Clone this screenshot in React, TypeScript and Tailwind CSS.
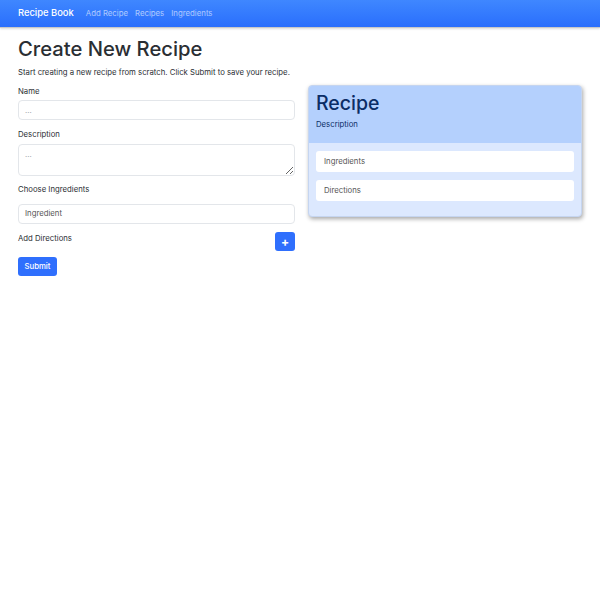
export default function App() {
  return (
    <div className="min-h-screen bg-white font-['Inter',sans-serif] text-[#2a2e33]">
      {/* Navbar */}
      <nav className="h-[28px] border-b border-[#c8c8c8] bg-gradient-to-b from-[#3f87ff] to-[#2a6efc] shadow-[0_1px_2px_rgba(0,0,0,0.15)]">
        <div className="flex h-full items-center px-[18px]">
          <span className="mr-[12px] text-[9.4px] font-medium text-white">Recipe Book</span>
          <div className="flex gap-[7px] text-[7.8px] text-white/60">
            <span>Add Recipe</span>
            <span>Recipes</span>
            <span>Ingredients</span>
          </div>
        </div>
      </nav>

      <div className="px-[18px] pt-[8px]">
        <h1 className="text-[20.2px] font-medium leading-[26px]">Create New Recipe</h1>
        <p className="mt-[4px] text-[7.75px] leading-[12px]">
          Start creating a new recipe from scratch. Click Submit to save your recipe.
        </p>

        <div className="mt-[3px] flex gap-[13px]">
          {/* Form */}
          <div className="w-[277px] shrink-0">
            <label className="block pt-[4px] text-[7.75px] leading-[12px]">Name</label>
            <input
              placeholder="..."
              className="mt-[3px] block h-[20px] w-full rounded-[4px] border border-[#e3e6ea] px-[6px] text-[7.75px] placeholder:text-[#9aa0a6]"
            />
            <label className="mt-[8px] block text-[7.75px] leading-[12px]">Description</label>
            <textarea
              placeholder="..."
              className="mt-[4px] block h-[32px] w-full rounded-[4px] border border-[#e3e6ea] px-[6px] py-[4px] text-[7.75px] placeholder:text-[#9aa0a6]"
            />
            <label className="mt-[7px] block text-[7.75px] leading-[12px]">Choose Ingredients</label>
            <div className="mt-[9px] flex h-[20px] w-full items-center rounded-[4px] border border-[#e3e6ea] px-[6px] text-[7.75px] text-[#555]">
              Ingredient
            </div>
            <div className="mt-[8px] flex items-start justify-between">
              <span className="text-[7.75px] leading-[12px]">Add Directions</span>
              <button className="flex h-[19px] w-[20px] items-center justify-center rounded-[3px] bg-[#2f6ffd] text-[12px] font-bold leading-none text-white">
                +
              </button>
            </div>
            <button className="mt-[6px] h-[19px] rounded-[3px] bg-[#2f6ffd] px-[6.5px] text-[7.75px] font-medium text-white">
              Submit
            </button>
          </div>

          {/* Preview card */}
          <div className="mt-[4px] h-[132px] w-[276px] overflow-hidden rounded-[4px] border border-[#c5d5f0] bg-[#dce8fe] shadow-[1px_2px_4px_rgba(0,0,0,0.35)]">
            <div className="h-[57px] bg-[#b4d0fd] px-[7px] pt-[5px] text-[#0b2d66]">
              <h2 className="text-[19.5px] font-medium leading-[24px]">Recipe</h2>
              <p className="mt-[3px] text-[7.75px] leading-[12px]">Description</p>
            </div>
            <div className="flex flex-col gap-[8px] px-[7px] pt-[8px]">
              <div className="flex h-[21px] items-center rounded-[3px] bg-white px-[8px] text-[7.75px] text-[#555]">
                Ingredients
              </div>
              <div className="flex h-[21px] items-center rounded-[3px] bg-white px-[8px] text-[7.75px] text-[#555]">
                Directions
              </div>
            </div>
          </div>
        </div>
      </div>
    </div>
  );
}
